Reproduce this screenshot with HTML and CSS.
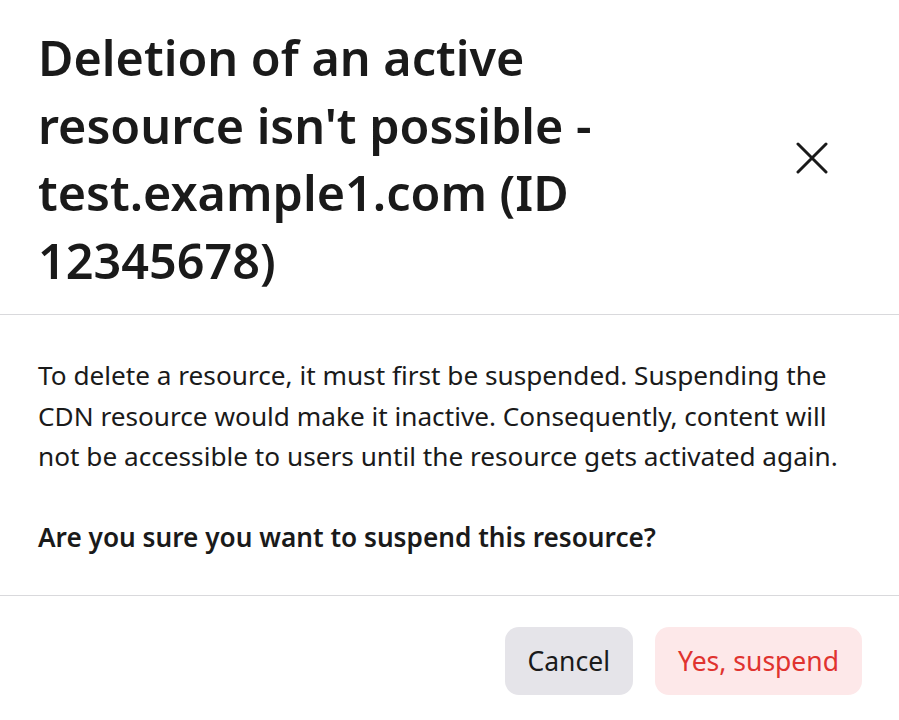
FILE: index.html
```html
<!DOCTYPE html>
<html lang="en">
<head>
<meta charset="utf-8">
<title>Delete resource</title>
<link rel="stylesheet" href="styles.css">
</head>
<body>
<div class="dialog">
  <header class="dialog-header">
    <h1 class="dialog-title">Deletion of an active resource isn't possible - test.example1.com (ID 12345678)</h1>
    <button class="close-btn" aria-label="Close">
      <svg width="32" height="32" viewBox="0 0 32 32" fill="none" stroke="#1a1a1a" stroke-width="3" stroke-linecap="round">
        <path d="M2 2L30 30M30 2L2 30"/>
      </svg>
    </button>
  </header>
  <section class="dialog-body">
    <p class="body-text">To delete a resource, it must first be suspended. Suspending the CDN resource would make it inactive. Consequently, content will not be accessible to users until the resource gets activated again.</p>
    <p class="body-question">Are you sure you want to suspend this resource?</p>
  </section>
  <footer class="dialog-footer">
    <button class="btn btn-cancel">Cancel</button>
    <button class="btn btn-danger">Yes, suspend</button>
  </footer>
</div>
</body>
</html>
```

FILE: styles.css
```css
html, body {
  margin: 0;
  padding: 0;
  background: #ffffff;
}

body {
  font-family: "Noto Sans", "Open Sans", sans-serif;
  color: #1a1a1a;
}

.dialog {
  width: 899px;
  display: flex;
  flex-direction: column;
}

.dialog-header {
  display: flex;
  align-items: center;
  padding: 24px 38px 20px 38px;
  border-bottom: 1px solid #d9d9dc;
}

.dialog-title {
  flex: 0 0 640px;
  margin: 0;
  font-size: 48.5px;
  line-height: 67.5px;
  font-weight: 600;
  color: #1a1a1a;
}

.close-btn {
  margin-left: auto;
  margin-right: 33px;
  margin-top: -3px;
  padding: 0;
  border: none;
  background: none;
  width: 32px;
  height: 32px;
  display: flex;
  align-items: center;
  justify-content: center;
  cursor: pointer;
}

.dialog-body {
  padding: 40px 38px 37px 38px;
  border-bottom: 1px solid #d9d9dc;
}

.body-text {
  margin: 0 0 40.5px 0;
  font-size: 26.2px;
  line-height: 40.5px;
  max-width: 823px;
}

.body-question {
  margin: 0;
  font-size: 26.2px;
  line-height: 40.5px;
  font-weight: 600;
}

.dialog-footer {
  display: flex;
  justify-content: flex-end;
  gap: 22px;
  padding: 31px 37px 25px 38px;
}

.btn {
  height: 68px;
  padding: 0 23px;
  border: none;
  border-radius: 14px;
  font-family: "Noto Sans", "Open Sans", sans-serif;
  font-size: 26.5px;
  cursor: pointer;
}

.btn-cancel {
  background: #e5e4e9;
  color: #1a1a1a;
}

.btn-danger {
  background: #fde8e9;
  color: #e0332f;
}
```
